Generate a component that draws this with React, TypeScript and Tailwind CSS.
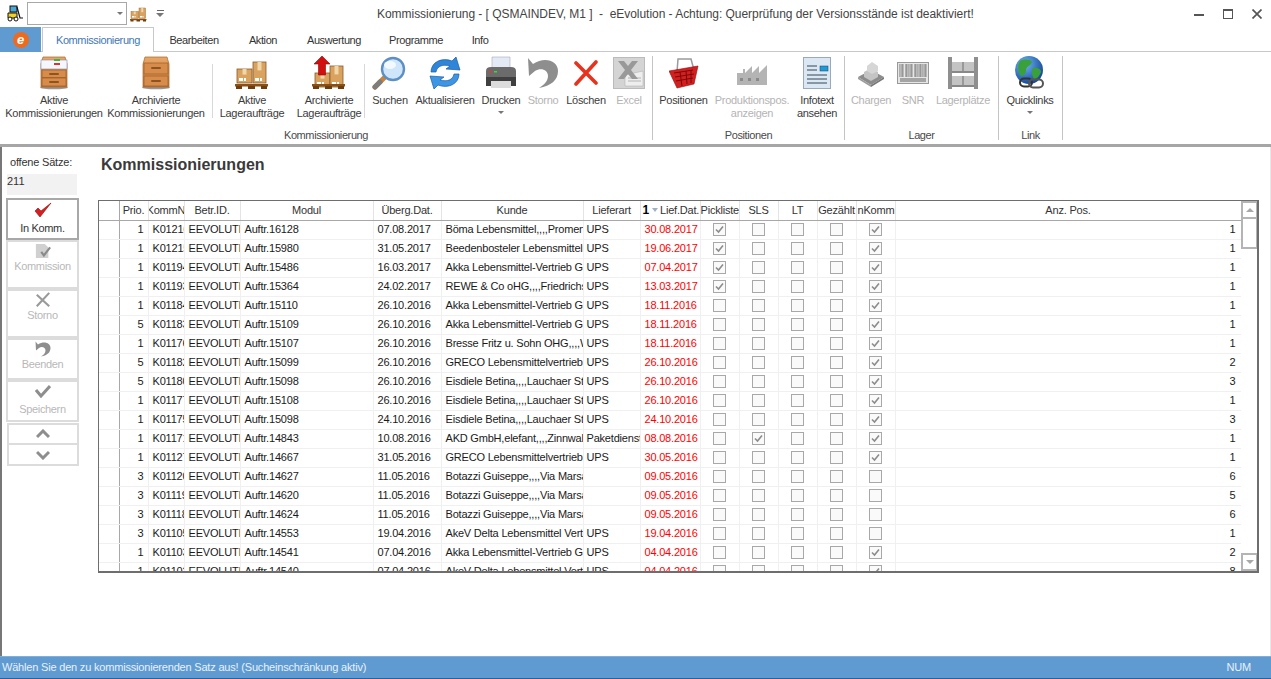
import React from "react";

function Box({ x, y, w, h, c = "#d9a35f" }: { x: number; y: number; w: number; h: number; c?: string }) {
  return (
    <g>
      <rect x={x} y={y} width={w} height={h} fill={c} stroke="#8a5a28" strokeWidth="0.8" />
      <rect x={x + w / 2 - 2} y={y} width={4} height={h * 0.4} fill="#f0d6a8" />
      <rect x={x + 2} y={y + h - 5} width={4} height={3} fill="#fff" />
      <rect x={x + 7} y={y + h - 5} width={2} height={3} fill="#fff" />
    </g>
  );
}

function Pallet({ up = false, size = 34 }: { up?: boolean; size?: number }) {
  return (
    <svg width={size} height={size} viewBox="0 0 34 34">
      <Box x={up ? 3 : 2} y={up ? 17 : 13} w={15} h={14} />
      <Box x={18} y={up ? 10 : 6} w={13} h={21} />
      <rect x="0" y="28" width="33" height="2.5" fill="#8a4f14" />
      <rect x="1" y="30" width="6" height="3" fill="#6e3c0d" />
      <rect x="13" y="30" width="7" height="3" fill="#6e3c0d" />
      <rect x="26" y="30" width="6" height="3" fill="#6e3c0d" />
      {up && <path d="M10 0 L18 8 L13.5 8 L13.5 19 L6.5 19 L6.5 8 L2 8 Z" fill="#d20f0f" stroke="#8c0808" strokeWidth="0.6" />}
    </svg>
  );
}

function Cabinet({ open, id }: { open?: boolean; id: string }) {
  return (
    <svg width="30" height="34" viewBox="0 0 30 34">
      <defs>
        <linearGradient id={id} x1="0" x2="0" y1="0" y2="1">
          <stop offset="0" stopColor="#e8a868" />
          <stop offset="1" stopColor="#c87838" />
        </linearGradient>
      </defs>
      <ellipse cx="15" cy="31.5" rx="14" ry="1.8" fill="#999" />
      <path d="M4 1 H26 L28 8 V31 H2 V8 Z" fill={`url(#${id})`} stroke="#a86428" strokeWidth="0.7" />
      {open && <rect x="2" y="4" width="26" height="9" fill="#f4f8fc" stroke="#88a" strokeWidth="0.6" />}
      {open && <rect x="15" y="3" width="6" height="2" fill="#39b54a" />}
      {open && <rect x="15" y="7" width="6" height="2" fill="#d33" />}
      {!open && <rect x="3" y="7" width="24" height="11" fill="#d88c4c" stroke="#9c5c24" strokeWidth="0.7" />}
      <rect x="3" y={open ? 14 : 20} width="24" height={open ? 7.5 : 10} fill="#d88c4c" stroke="#9c5c24" strokeWidth="0.7" />
      {open && <rect x="3" y="22" width="24" height="8" fill="#d88c4c" stroke="#9c5c24" strokeWidth="0.7" />}
      <rect x="10" y={open ? 17 : 11} width="10" height="2" rx="1" fill="#8c5420" />
      <rect x="10" y={open ? 25 : 24} width="10" height="2" rx="1" fill="#8c5420" />
    </svg>
  );
}

function Magnifier() {
  return (
    <svg width="36" height="34" viewBox="0 0 36 34">
      <path d="M3 31 L14 20" stroke="#c8843c" strokeWidth="5" strokeLinecap="round" />
      <path d="M3 31 L8 26" stroke="#7d7d7d" strokeWidth="5" strokeLinecap="round" />
      <circle cx="21" cy="13" r="11" fill="#cfe6fa" stroke="#5d8fc4" strokeWidth="2.4" />
      <ellipse cx="18" cy="9" rx="6" ry="4" fill="#f2faff" />
    </svg>
  );
}

function Refresh() {
  return (
    <svg width="34" height="34" viewBox="0 0 34 34">
      <path d="M3 16 C3 6 14 1 24 5 L28 1 L32 14 L18 13 L22 10 C15 8 9 10 8 16 Z" fill="#2f86d8" stroke="#1a5ca6" strokeWidth="0.7" />
      <path d="M31 18 C31 28 20 33 10 29 L6 33 L2 20 L16 21 L12 24 C19 26 25 24 26 18 Z" fill="#3d96e4" stroke="#1a5ca6" strokeWidth="0.7" />
    </svg>
  );
}

function Printer() {
  return (
    <svg width="34" height="34" viewBox="0 0 34 34">
      <path d="M8 1 H26 V14 H8 Z" fill="#e4e9f6" stroke="#aab" strokeWidth="0.6" />
      <path d="M2 15 Q2 11 7 11 H27 Q32 11 32 15 V27 H2 Z" fill="#6b6b6b" />
      <rect x="2" y="21" width="30" height="9" fill="#3f3f3f" />
      <rect x="7" y="25" width="20" height="7" fill="#dcdcdc" />
      <rect x="5" y="15" width="3" height="1.5" fill="#e33" />
      <rect x="10" y="15" width="3" height="1.5" fill="#3d3" />
    </svg>
  );
}

function Undo({ size = 32, c = "#8e8e8e" }: { size?: number; c?: string }) {
  return (
    <svg width={size} height={size} viewBox="0 0 32 32">
      <path d="M1 1 L2 19 L8 14 C14 10 21 13 21 19 C21 24 17 28 12 31 C24 29 31 23 31 14 C31 4 18 -1 6 7 Z" fill={c} />
    </svg>
  );
}

function RedX() {
  return (
    <svg width="26" height="26" viewBox="0 0 26 26">
      <path d="M3 3 L23 23 M23 2 L3 24" stroke="#e8321e" strokeWidth="3.6" strokeLinecap="round" />
    </svg>
  );
}

function ExcelIcon() {
  return (
    <svg width="32" height="32" viewBox="0 0 32 32">
      <rect x="0.5" y="0.5" width="31" height="31" fill="#d4d4d4" stroke="#bbb" />
      <path d="M12 18 L30 14 V29 L12 29 Z" fill="#eee" stroke="#aaa" strokeWidth="0.5" />
      <path d="M15 21 H28 M15 24 H28" stroke="#b4b4b4" />
      <path d="M5 4 H11 L15 9 L19 4 H25 L18 13 L25 22 H19 L15 17 L11 22 H5 L12 13 Z" fill="#999" />
    </svg>
  );
}

function Basket() {
  return (
    <svg width="30" height="34" viewBox="0 0 30 34">
      <path d="M8 16 L9 3 H22 L25 14" fill="none" stroke="#9a9a9a" strokeWidth="1.5" />
      <path d="M0 15 L29 10 L25 28 L8 32 Z" fill="#d21f1f" stroke="#8c0d0d" strokeWidth="0.6" />
      <path d="M5 17 L24 14 M6 21 L25 18 M7 25 L24 22 M11 16 L13 30 M17 15 L18 28 M22 14 L22 27" stroke="#7d0808" strokeWidth="1" />
    </svg>
  );
}

function Factory() {
  return (
    <svg width="32" height="28" viewBox="0 0 32 28">
      <path d="M1 26 V14 H7 V10 H9 V14 L16 7 V14 L23 7 V14 L31 6 V26 Z" fill="#b4b4b4" />
      <path d="M4 19 h3 v3 h-3 z M12 19 h3 v3 h-3 z M20 19 h3 v3 h-3 z" fill="#8a8a8a" />
    </svg>
  );
}

function InfoDoc() {
  return (
    <svg width="28" height="32" viewBox="0 0 28 32">
      <rect x="0.5" y="0.5" width="27" height="31" fill="#dbe7f3" stroke="#9ab" />
      <rect x="17" y="9" width="8" height="5" fill="#1f9ad6" stroke="#146" strokeWidth="0.5" />
      <path d="M4 9 H14 M4 13 H14 M4 18 H24 M4 22 H24 M4 26 H24" stroke="#234" strokeWidth="0.9" />
    </svg>
  );
}

function Crates() {
  return (
    <svg width="30" height="28" viewBox="0 0 30 28">
      <path d="M2 18 L15 26 L28 18 L15 11 Z" fill="#8c8c8c" />
      <path d="M8 13 L15 9 L22 13 V18 L15 22 L8 18 Z" fill="#c4c4c4" />
      <path d="M11 7 L16 3 L22 7 V12 L16 15 L11 12 Z" fill="#d6d6d6" />
      <path d="M2 18 L15 26 V28 L2 20 Z" fill="#9c9c9c" />
      <path d="M28 18 L15 26 V28 L28 20 Z" fill="#777" />
    </svg>
  );
}

function Barcode() {
  const bars = [2, 4, 5, 8, 9, 11, 13, 14, 17, 18, 20, 22, 23, 25, 27, 28];
  return (
    <svg width="32" height="22" viewBox="0 0 32 22">
      <rect x="0.5" y="0.5" width="31" height="21" fill="#e6e6e6" stroke="#999" />
      {bars.map((x) => (
        <rect key={x} x={x + 0.5} y="2" width="0.9" height="13" fill="#777" />
      ))}
      <rect x="3" y="16" width="26" height="4" fill="#888" opacity="0.7" />
    </svg>
  );
}

function Rack() {
  return (
    <svg width="32" height="32" viewBox="0 0 32 32">
      <rect x="1" y="0" width="4" height="32" fill="#8f8f8f" />
      <rect x="27" y="0" width="4" height="32" fill="#8f8f8f" />
      <rect x="5" y="5" width="22" height="9" fill="#c4c4c4" />
      <rect x="5" y="19" width="22" height="9" fill="#c4c4c4" />
      <rect x="5" y="14" width="22" height="2" fill="#888" />
      <rect x="5" y="28" width="22" height="2" fill="#888" />
      <rect x="15" y="5" width="2" height="9" fill="#999" />
      <rect x="15" y="19" width="2" height="9" fill="#999" />
    </svg>
  );
}

function Globe() {
  return (
    <svg width="32" height="34" viewBox="0 0 32 34">
      <defs>
        <radialGradient id="gl" cx="0.35" cy="0.3" r="0.8">
          <stop offset="0" stopColor="#6fb8f0" />
          <stop offset="1" stopColor="#0c3c92" />
        </radialGradient>
      </defs>
      <circle cx="15" cy="14" r="14" fill="url(#gl)" />
      <path d="M6 5 C10 3 16 3 18 6 C17 10 12 10 12 14 C12 18 9 20 7 20 C4 16 3 9 6 5 Z" fill="#3aa03a" />
      <path d="M19 12 C23 11 27 13 27 16 C25 21 22 23 20 23 C18 20 17 15 19 12 Z" fill="#3aa03a" />
      <rect x="6" y="22.5" width="12" height="8" rx="4" fill="none" stroke="#333" strokeWidth="2" />
      <rect x="15" y="23.5" width="14" height="8" rx="4" fill="none" stroke="#555" strokeWidth="2" />
    </svg>
  );
}

function Forklift() {
  return (
    <svg width="17" height="17" viewBox="0 0 17 17">
      <rect x="4" y="1" width="7" height="6" fill="#4aa8d8" stroke="#111" strokeWidth="1" />
      <path d="M2 8 H11 V13 H2 Z" fill="#f0d020" stroke="#111" strokeWidth="1" />
      <path d="M11 2 L14 13 H17" stroke="#111" strokeWidth="1.2" fill="none" />
      <circle cx="4" cy="14" r="2" fill="#fff" stroke="#111" />
      <circle cx="10" cy="14" r="2" fill="#fff" stroke="#111" />
    </svg>
  );
}

function RibbonBtn({ w, lines, icon, disabled, caret }: { w: string; lines: string[]; icon: React.ReactNode; disabled?: boolean; caret?: boolean }) {
  return (
    <div className={`${w} flex flex-col items-center shrink-0`}>
      <div className="h-[42px] flex items-center justify-center">{icon}</div>
      <div className={`text-[11px] leading-[13px] tracking-[-0.3px] text-center whitespace-nowrap ${disabled ? "text-[#b4b4b4]" : "text-[#3c3c3c]"}`}>
        {lines.map((l) => (
          <div key={l}>{l}</div>
        ))}
      </div>
      {caret && <div className="mt-[4px] w-0 h-0 border-x-[3px] border-x-transparent border-t-[3px] border-t-[#777]" />}
    </div>
  );
}

const InnerSep = ({ cls }: { cls: string }) => <div className={`w-px h-[54px] mt-[12px] bg-[#d8d8d8] shrink-0 ${cls}`} />;

function Group({ label, w, children }: { label: string; w: string; children: React.ReactNode }) {
  return (
    <div className={`${w} shrink-0 flex flex-col h-full`}>
      <div className="flex h-[77px]">{children}</div>
      <div className="text-[11px] leading-[13px] tracking-[-0.4px] text-center text-[#4a4a4a]">{label}</div>
    </div>
  );
}

const GroupSep = () => <div className="w-px h-[84px] mt-[4px] bg-[#c4c4c4] shrink-0" />;

function Ribbon() {
  return (
    <div className="h-[92px] flex bg-white items-start">
      <Group label="Kommissionierung" w="w-[652px]">
        <div className="w-[4px] shrink-0" />
        <RibbonBtn w="w-[100px]" lines={["Aktive", "Kommissionierungen"]} icon={<Cabinet open id="w1" />} />
        <RibbonBtn w="w-[104px]" lines={["Archivierte", "Kommissionierungen"]} icon={<Cabinet id="w2" />} />
        <InnerSep cls="ml-[4px]" />
        <div className="w-[1px] shrink-0" />
        <RibbonBtn w="w-[76px]" lines={["Aktive", "Lageraufträge"]} icon={<Pallet />} />
        <div className="w-[4px] shrink-0" />
        <RibbonBtn w="w-[70px]" lines={["Archivierte", "Lageraufträge"]} icon={<Pallet up />} />
        <InnerSep cls="" />
        <div className="w-[1px] shrink-0" />
        <RibbonBtn w="w-[48px]" lines={["Suchen"]} icon={<Magnifier />} />
        <RibbonBtn w="w-[62px]" lines={["Aktualisieren"]} icon={<Refresh />} />
        <RibbonBtn w="w-[50px]" lines={["Drucken"]} icon={<Printer />} caret />
        <RibbonBtn w="w-[34px]" lines={["Storno"]} icon={<Undo />} disabled />
        <RibbonBtn w="w-[52px]" lines={["Löschen"]} icon={<RedX />} />
        <RibbonBtn w="w-[34px]" lines={["Excel"]} icon={<ExcelIcon />} disabled />
      </Group>
      <GroupSep />
      <Group label="Positionen" w="w-[191px]">
        <div className="w-[2px] shrink-0" />
        <RibbonBtn w="w-[57px]" lines={["Positionen"]} icon={<Basket />} />
        <RibbonBtn w="w-[80px]" lines={["Produktionspos.", "anzeigen"]} icon={<Factory />} disabled />
        <RibbonBtn w="w-[50px]" lines={["Infotext", "ansehen"]} icon={<InfoDoc />} />
      </Group>
      <GroupSep />
      <Group label="Lager" w="w-[153px]">
        <div className="w-[2px] shrink-0" />
        <RibbonBtn w="w-[48px]" lines={["Chargen"]} icon={<Crates />} disabled />
        <RibbonBtn w="w-[36px]" lines={["SNR"]} icon={<Barcode />} disabled />
        <RibbonBtn w="w-[64px]" lines={["Lagerplätze"]} icon={<Rack />} disabled />
      </Group>
      <GroupSep />
      <Group label="Link" w="w-[63px]">
        <div className="w-[2px] shrink-0" />
        <RibbonBtn w="w-[58px]" lines={["Quicklinks"]} icon={<Globe />} caret />
      </Group>
      <GroupSep />
    </div>
  );
}

function SideBtn({ label, icon, h, active, iconH, labelM }: { label: string; icon: React.ReactNode; h: string; active?: boolean; iconH: string; labelM: string }) {
  return (
    <div className={`${h} w-[73px] border-2 flex flex-col items-center ${active ? "border-[#a8a8a8]" : "border-[#dcdcdc]"}`}>
      <div className={`${iconH} flex items-center justify-center`}>{icon}</div>
      <div className={`text-[11px] leading-[13px] tracking-[-0.35px] ${labelM} whitespace-nowrap ${active ? "text-[#333]" : "text-[#b8b8b8]"}`}>{label}</div>
    </div>
  );
}

function Chevron({ up }: { up?: boolean }) {
  return (
    <svg width="14" height="10" viewBox="0 0 14 10">
      <path d={up ? "M1 8 L7 2 L13 8" : "M1 2 L7 8 L13 2"} fill="none" stroke="#8e8e8e" strokeWidth="3" />
    </svg>
  );
}

function LeftPanel() {
  return (
    <div className="w-[96px] shrink-0 pl-[4px] pt-[9px]">
      <div className="text-[11px] leading-[13px] tracking-[-0.2px] text-[#333] pl-[4px]">offene Sätze:</div>
      <div className="ml-[1px] mt-[5px] w-[70px] h-[21px] bg-[#f2f2f2] text-[11px] leading-[14px] text-[#333]">211</div>
      <div className="mt-[3px] flex flex-col">
        <SideBtn
          active
          h="h-[42px]"
          iconH="h-[20px]"
          labelM="mt-[2px]"
          label="In Komm."
          icon={
            <svg width="18" height="17" viewBox="0 0 18 17">
              <path d="M1 9 L6 15 L17 1 L7 9 L4 6 Z" fill="#d81f1f" stroke="#8c0808" strokeWidth="0.6" />
            </svg>
          }
        />
        <SideBtn
          h="h-[49px]"
          iconH="h-[18px]"
          labelM="mt-0"
          label="Kommission"
          icon={
            <svg width="16" height="16" viewBox="0 0 18 18">
              <path d="M1 1 H11 L15 5 V17 H1 Z" fill="#d0d0d0" />
              <path d="M7 10 L10 14 L17 5" fill="none" stroke="#8a8a8a" strokeWidth="2.4" />
            </svg>
          }
        />
        <SideBtn
          h="h-[49px]"
          iconH="h-[18px]"
          labelM="mt-0"
          label="Storno"
          icon={
            <svg width="16" height="16" viewBox="0 0 18 18">
              <path d="M2 3 L16 16 M16 1 L2 16" stroke="#9a9a9a" strokeWidth="2.4" />
            </svg>
          }
        />
        <SideBtn h="h-[42px]" iconH="h-[18px]" labelM="mt-0" label="Beenden" icon={<Undo size={16} />} />
        <SideBtn
          h="h-[42px]"
          iconH="h-[18px]"
          labelM="mt-[3px]"
          label="Speichern"
          icon={
            <svg width="16" height="14" viewBox="0 0 16 14">
              <path d="M1 6 L6 12 L15 2" fill="none" stroke="#8e8e8e" strokeWidth="3" />
            </svg>
          }
        />
        <div className="h-[22px] w-[72px] ml-px border-2 border-[#dcdcdc] flex items-center justify-center mt-[1px]">
          <Chevron up />
        </div>
        <div className="h-[21px] w-[72px] ml-px border-2 border-t-0 border-[#dcdcdc] flex items-center justify-center">
          <Chevron />
        </div>
      </div>
    </div>
  );
}

type Row = [number, string, number, string, string, string, string, number[], number];
const A = "Akka Lebensmittel-Vertrieb GmbH";
const E = "Eisdiele Betina,,,,Lauchaer Str";
const G = "GRECO Lebensmittelvertriebs";
const B = "Botazzi Guiseppe,,,,Via Marsala";
const D = "AkeV Delta Lebensmittel Vertrieb";
const rows: Row[] = [
  [1, "K012163", 16128, "07.08.2017", "Böma Lebensmittel,,,,Promenade", "UPS", "30.08.2017", [1, 0, 0, 0, 1], 1],
  [1, "K012159", 15980, "31.05.2017", "Beedenbosteler Lebensmittelmarkt", "UPS", "19.06.2017", [1, 0, 0, 0, 1], 1],
  [1, "K011946", 15486, "16.03.2017", A, "UPS", "07.04.2017", [1, 0, 0, 0, 1], 1],
  [1, "K011933", 15364, "24.02.2017", "REWE & Co oHG,,,,Friedrichshafen", "UPS", "13.03.2017", [1, 0, 0, 0, 1], 1],
  [1, "K011846", 15110, "26.10.2016", A, "UPS", "18.11.2016", [0, 0, 0, 0, 1], 1],
  [5, "K011833", 15109, "26.10.2016", A, "UPS", "18.11.2016", [0, 0, 0, 0, 1], 1],
  [1, "K011769", 15107, "26.10.2016", "Bresse Fritz u. Sohn OHG,,,,Wald", "UPS", "18.11.2016", [0, 0, 0, 0, 1], 1],
  [5, "K01182", 15099, "26.10.2016", G, "UPS", "26.10.2016", [0, 0, 0, 0, 1], 2],
  [5, "K01180", 15098, "26.10.2016", E, "UPS", "26.10.2016", [0, 0, 0, 0, 1], 3],
  [1, "K01177", 15108, "26.10.2016", E, "UPS", "26.10.2016", [0, 0, 0, 0, 1], 1],
  [1, "K011759", 15098, "24.10.2016", E, "UPS", "24.10.2016", [0, 0, 0, 0, 1], 3],
  [1, "K01171", 14843, "10.08.2016", "AKD GmbH,elefant,,,,Zinnwaldstr", "Paketdienst", "08.08.2016", [0, 1, 0, 0, 1], 1],
  [1, "K011271", 14667, "31.05.2016", G, "UPS", "30.05.2016", [0, 0, 0, 0, 1], 1],
  [3, "K011206", 14627, "11.05.2016", B, "", "09.05.2016", [0, 0, 0, 0, 0], 6],
  [3, "K011196", 14620, "11.05.2016", B, "", "09.05.2016", [0, 0, 0, 0, 0], 5],
  [3, "K011186", 14624, "11.05.2016", B, "", "09.05.2016", [0, 0, 0, 0, 0], 6],
  [3, "K011056", 14553, "19.04.2016", D, "UPS", "19.04.2016", [0, 0, 0, 0, 0], 1],
  [1, "K011036", 14541, "07.04.2016", A, "UPS", "04.04.2016", [0, 0, 0, 0, 1], 2],
  [1, "K011026", 14540, "07.04.2016", D, "UPS", "04.04.2016", [0, 0, 0, 0, 1], 8],
];

function Check({ on }: { on: number }) {
  return (
    <div className="w-[13px] h-[13px] mx-auto border border-[#a8a8a8] bg-[#fafafa] flex items-center justify-center">
      {on ? (
        <svg width="9" height="9" viewBox="0 0 9 9">
          <path d="M1 4.5 L3.5 7 L8 1.5" fill="none" stroke="#8c8c8c" strokeWidth="1.6" />
        </svg>
      ) : null}
    </div>
  );
}

const th = "border-r border-[#e4e4e4] border-b border-b-[#a8a8a8] font-normal text-center text-[#333] p-0 overflow-hidden whitespace-nowrap";
const td = "border-r border-b border-[#f0f0f0] p-0 overflow-hidden whitespace-nowrap text-[#1a1a1a]";

function Grid() {
  return (
    <div className="mt-[33px] w-[1161px] h-[373px] border border-r-2 border-b-2 border-[#6e6e6e] flex overflow-hidden">
      <div className="w-[1142px] shrink-0 overflow-hidden">
        <table className="table-fixed border-collapse w-[1142px] text-[11px] leading-[13px] tracking-[-0.2px]">
          <colgroup>
            <col className="w-[20px]" />
            <col className="w-[29px]" />
            <col className="w-[36px]" />
            <col className="w-[56px]" />
            <col className="w-[133px]" />
            <col className="w-[68px]" />
            <col className="w-[142px]" />
            <col className="w-[57px]" />
            <col className="w-[60px]" />
            <col className="w-[39px]" />
            <col className="w-[39px]" />
            <col className="w-[39px]" />
            <col className="w-[39px]" />
            <col className="w-[39px]" />
            <col className="w-[346px]" />
          </colgroup>
          <thead>
            <tr className="h-[19px]">
              <th className={`${th} border-r-[#a8a8a8]`} />
              <th className={th}>Prio.</th>
              <th className={`${th} text-left`}>
                <span className="block -ml-[2px]">KommNr</span>
              </th>
              <th className={th}>Betr.ID.</th>
              <th className={th}>Modul</th>
              <th className={th}>Überg.Dat.</th>
              <th className={th}>Kunde</th>
              <th className={th}>Lieferart</th>
              <th className={`${th} text-left`}>
                <span className="inline-flex items-center w-full">
                  <b className="text-[12px] text-black ml-[2px]">1</b>
                  <span className="ml-[3px] w-0 h-0 border-x-[3px] border-x-transparent border-t-[4px] border-t-[#a0b0c0]" />
                  <span className="ml-[2px]">Lief.Dat.</span>
                </span>
              </th>
              <th className={th}>Pickliste</th>
              <th className={th}>SLS</th>
              <th className={th}>LT</th>
              <th className={th}>Gezählt</th>
              <th className={`${th} text-left`}>
                <span className="ml-[1px]">nKomm.</span>
              </th>
              <th className={th}>Anz. Pos.</th>
            </tr>
          </thead>
          <tbody>
            {rows.map((r, i) => (
              <tr key={i} className="h-[19px]">
                <td className={`${td} border-r-[#a8a8a8]`} />
                <td className={`${td} text-right pr-[4px]`}>{r[0]}</td>
                <td className={`${td} pl-[4px]`}>{r[1]}</td>
                <td className={`${td} pl-[4px]`}>EEVOLUTION</td>
                <td className={`${td} pl-[4px]`}>Auftr.{r[2]}</td>
                <td className={`${td} pl-[4px]`}>{r[3]}</td>
                <td className={`${td} pl-[4px]`}>{r[4]}</td>
                <td className={`${td} pl-[3px]`}>{r[5]}</td>
                <td className={`${td} pl-[4px] !text-[#ff0000]`}>{r[6]}</td>
                {r[7].map((c, j) => (
                  <td key={j} className={td}>
                    <Check on={c} />
                  </td>
                ))}
                <td className={`${td} text-right pr-[5px]`}>{r[8]}</td>
              </tr>
            ))}
          </tbody>
        </table>
      </div>
      <div className="w-[17px] shrink-0 flex flex-col">
        <div className="h-[18px] border-2 border-[#b4b4b4] flex items-center justify-center">
          <div className="w-0 h-0 border-x-[4px] border-x-transparent border-b-[4px] border-b-[#a8a8a8]" />
        </div>
        <div className="h-[30px] border-2 border-t-0 border-[#b4b4b4]" />
        <div className="flex-1" />
        <div className="h-[18px] border-2 border-[#b4b4b4] flex items-center justify-center">
          <div className="w-0 h-0 border-x-[4px] border-x-transparent border-t-[4px] border-t-[#a8a8a8]" />
        </div>
      </div>
    </div>
  );
}

export default function App() {
  return (
    <div className="font-[Liberation_Sans,Arial,sans-serif] w-[1271px] h-[679px] flex flex-col bg-white overflow-hidden">
      <div className="h-[27px] flex items-center shrink-0 relative">
        <div className="w-[6px]" />
        <Forklift />
        <div className="ml-[4px] w-[100px] h-[23px] border border-[#a8a8a8] flex items-center justify-end pr-[3px]">
          <div className="w-0 h-0 border-x-[3px] border-x-transparent border-t-[3px] border-t-[#777]" />
        </div>
        <div className="ml-[3px]">
          <Pallet size={17} />
        </div>
        <div className="ml-[9px] flex flex-col items-center gap-[2px]">
          <div className="w-[7px] h-px bg-[#666]" />
          <div className="w-0 h-0 border-x-[4px] border-x-transparent border-t-[4px] border-t-[#777]" />
        </div>
        <div className="ml-[213px] text-[12px] tracking-[-0.04px] text-[#444] whitespace-nowrap">
          Kommissionierung - [ QSMAINDEV, M1 ]&nbsp; -&nbsp; eEvolution - Achtung: Querprüfung der Versionsstände ist deaktiviert!
        </div>
        <div className="ml-auto flex items-center pr-[9px] gap-[19px]">
          <div className="w-[10px] h-[2px] bg-[#555] mt-[3px]" />
          <div className="w-[10px] h-[10px] border border-[#555] border-t-[2px]" />
          <svg width="10" height="10" viewBox="0 0 10 10">
            <path d="M0.5 0.5 L9.5 9.5 M9.5 0.5 L0.5 9.5" stroke="#555" strokeWidth="1.7" />
          </svg>
        </div>
      </div>

      <div className="h-[25px] flex shrink-0 border-b border-[#c8c8c8] text-[11px] tracking-[-0.4px] text-[#333]">
        <div className="w-[41px] h-[25px] bg-[#5f9bd1] flex items-center justify-center">
          <div className="w-[16px] h-[16px] rounded-full bg-[#ee6a1c] text-white text-[13px] leading-[15px] font-bold text-center italic">e</div>
        </div>
        <div className="ml-[1px] w-[112px] h-[25px] border border-b-0 border-[#c8c8c8] bg-white text-center leading-[25px] text-[#3f78b4]">Kommissionierung</div>
        <div className="w-[80px] text-center leading-[26px]">Bearbeiten</div>
        <div className="w-[58px] text-center leading-[26px]">Aktion</div>
        <div className="w-[84px] text-center leading-[26px]">Auswertung</div>
        <div className="w-[80px] text-center leading-[26px]">Programme</div>
        <div className="w-[48px] text-center leading-[26px]">Info</div>
      </div>

      <Ribbon />

      <div className="h-[3px] bg-[#a6a6a6] shrink-0" />

      <div className="flex-1 flex border-l-2 border-[#777] min-h-0 border-r border-r-[#e8e8e8]">
        <LeftPanel />
        <div className="flex-1 min-w-0 relative">
          <div className="pl-[3px] pt-[9px] h-[20px] text-[16px] leading-[18px] font-bold text-[#3a3a3a]">Kommissionierungen</div>
          <Grid />
        </div>
      </div>

      <div className="h-[23px] bg-[#5f9bd1] border-t border-[#7fb0dc] border-b border-b-[#2a5fa0] flex items-center justify-between text-[11px] tracking-[-0.19px] text-[#e8f1fa] shrink-0">
        <span className="pl-[2px]">Wählen Sie den zu kommissionierenden Satz aus! (Sucheinschränkung aktiv)</span>
        <span className="pr-[20px]">NUM</span>
      </div>
    </div>
  );
}
